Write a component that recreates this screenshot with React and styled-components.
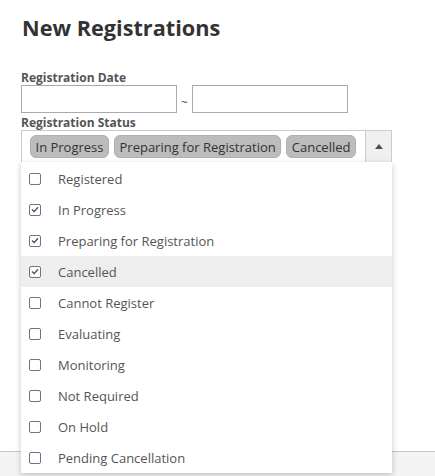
import React from "react";
import styled, { createGlobalStyle } from "styled-components";

const Global = createGlobalStyle`
  html, body { margin: 0; padding: 0; background: #fff; }
  body { font-family: "Open Sans", "Liberation Sans", sans-serif; color: #333; }
  * { box-sizing: border-box; }
`;

const Page = styled.div`
  display: flex;
  flex-direction: column;
  min-height: 476px;
`;

const Main = styled.main`
  padding: 13px 21px 0;
  min-height: 451px;
`;

const Title = styled.h2`
  margin: 0 0 0 1px;
  font-size: 21.7px;
  line-height: 30px;
  font-weight: 700;
  color: #333;
`;

const Field = styled.div`
  margin-top: ${(p) => p.$top}px;
`;

const Label = styled.div`
  font-size: 12px;
  line-height: 15px;
  font-weight: 700;
  color: #555;
`;

const DateRow = styled.div`
  display: flex;
  align-items: center;
`;

const DateInput = styled.div`
  width: 156px;
  height: 28px;
  border: 1px solid #aaa;
  background: #fff;
`;

const Tilde = styled.span`
  width: 15px;
  text-align: center;
  font-size: 12px;
  color: #555;
  padding-top: 6px;
`;

const SelectWrap = styled.div`
  position: relative;
  width: 371px;
`;

const SelectBox = styled.div`
  display: flex;
  height: 33px;
  border: 1px solid #ccc;
  background: #fff;
`;

const Tags = styled.div`
  flex: 1;
  display: flex;
  align-items: center;
  gap: 5px;
  padding-left: 8px;
`;

const Tag = styled.span`
  height: 23px;
  line-height: 22px;
  padding: 0 4.5px;
  border-radius: 6px;
  background: #bcbcbc;
  border: 1px solid #b0b0b0;
  font-size: 13px;
  color: #333;
  white-space: nowrap;
`;

const ArrowBtn = styled.div`
  width: 26px;
  border-left: 1px solid #ccc;
  background: #f0f0f0;
  display: flex;
  align-items: center;
  justify-content: center;
`;

const Dropdown = styled.ul`
  position: absolute;
  top: 32px;
  left: 0;
  width: 371px;
  margin: 0;
  padding: 1px 0 0;
  list-style: none;
  background: #fff;
  box-shadow: 0 2px 6px rgba(0, 0, 0, 0.22);
  z-index: 5;
`;

const Item = styled.li`
  display: flex;
  align-items: center;
  height: 31px;
  padding-left: 8px;
  background: ${(p) => (p.$active ? "#eeeeee" : "transparent")};
  font-size: 13px;
  color: #555;
`;

const Box = styled.span`
  width: 12px;
  height: 12px;
  border: 1.5px solid #6c7587;
  border-radius: 2px;
  margin-right: 17px;
  display: flex;
  align-items: center;
  justify-content: center;
  background: #fff;
`;

const Footer = styled.footer`
  height: 25px;
  border-top: 1px solid #c8c8c8;
  background: #f4f4f4;
`;

const items = [
  ["Registered", false],
  ["In Progress", true],
  ["Preparing for Registration", true],
  ["Cancelled", true],
  ["Cannot Register", false],
  ["Evaluating", false],
  ["Monitoring", false],
  ["Not Required", false],
  ["On Hold", false],
  ["Pending Cancellation", false],
];

export default function App() {
  return (
    <Page>
      <Global />
      <Main>
        <Title>New Registrations</Title>
        <Field $top={27}>
          <Label>Registration Date</Label>
          <DateRow>
            <DateInput />
            <Tilde>~</Tilde>
            <DateInput />
          </DateRow>
        </Field>
        <Field $top={2}>
          <Label>Registration Status</Label>
          <SelectWrap>
            <SelectBox>
              <Tags>
                <Tag>In Progress</Tag>
                <Tag>Preparing for Registration</Tag>
                <Tag>Cancelled</Tag>
              </Tags>
              <ArrowBtn>
                <svg width="8" height="5" viewBox="0 0 8 5">
                  <path d="M0 5 L4 0 L8 5 Z" fill="#4a5063" />
                </svg>
              </ArrowBtn>
            </SelectBox>
            <Dropdown>
              {items.map(([name, checked], i) => (
                <Item key={name} $active={i === 3}>
                  <Box>
                    {checked && (
                      <svg width="8" height="7" viewBox="0 0 8 7">
                        <path d="M1 3.5 L3.2 5.6 L7 1.2" fill="none" stroke="#4a5063" strokeWidth="1.4" />
                      </svg>
                    )}
                  </Box>
                  {name}
                </Item>
              ))}
            </Dropdown>
          </SelectWrap>
        </Field>
      </Main>
      <Footer />
    </Page>
  );
}
